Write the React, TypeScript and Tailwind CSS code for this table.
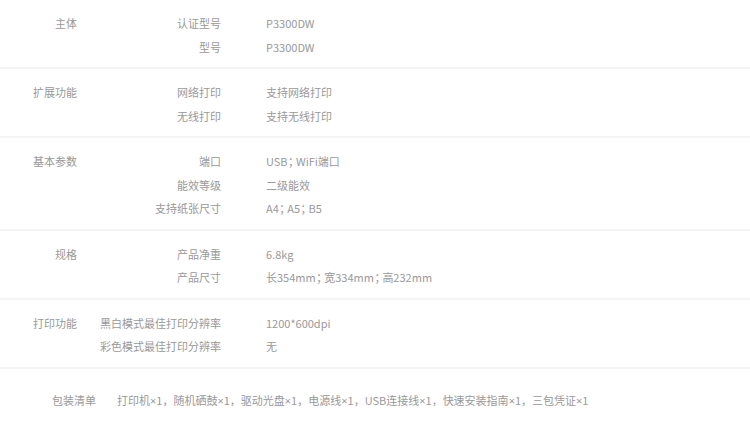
import React from "react";

type Section = { title: string; rows: [string, string][] };

const sections: Section[] = [
  { title: "主体", rows: [["认证型号", "P3300DW"], ["型号", "P3300DW"]] },
  { title: "扩展功能", rows: [["网络打印", "支持网络打印"], ["无线打印", "支持无线打印"]] },
  {
    title: "基本参数",
    rows: [
      ["端口", "USB；WiFi端口"],
      ["能效等级", "二级能效"],
      ["支持纸张尺寸", "A4；A5；B5"],
    ],
  },
  { title: "规格", rows: [["产品净重", "6.8kg"], ["产品尺寸", "长354mm；宽334mm；高232mm"]] },
  {
    title: "打印功能",
    rows: [
      ["黑白模式最佳打印分辨率", "1200*600dpi"],
      ["彩色模式最佳打印分辨率", "无"],
    ],
  },
];

function Val({ text }: { text: string }) {
  const parts = text.split("；");
  return (
    <>
      {parts.map((p, i) => (
        <React.Fragment key={i}>
          {p}
          {i < parts.length - 1 && (
            <span className="[font-feature-settings:'halt'] pl-[0.5px] pr-[2.5px]">；</span>
          )}
        </React.Fragment>
      ))}
    </>
  );
}

const pack = ["打印机", "随机硒鼓", "驱动光盘", "电源线", "USB连接线", "快速安装指南", "三包凭证"];

export default function App() {
  return (
    <div
      className="w-[750px] h-[429px] bg-white text-[11px] text-[#999] overflow-hidden"
      style={{ fontFamily: '"Noto Sans CJK SC", "Noto Sans", sans-serif' }}
    >
      {sections.map((s) => (
        <div key={s.title} className="flex pt-[12px] pb-[8px] border-b-2 border-[#f4f4f4]">
          <div className="w-[77px] shrink-0 text-right leading-[23.5px]">{s.title}</div>
          <div className="flex flex-col">
            {s.rows.map(([k, v]) => (
              <div key={k} className="flex leading-[23.5px]">
                <div className="w-[144px] text-right whitespace-nowrap">{k}</div>
                <div className="ml-[45px] whitespace-nowrap">
                  <Val text={v} />
                </div>
              </div>
            ))}
          </div>
        </div>
      ))}
      <div className="flex pt-[20px] pb-[18px] leading-[23.5px]">
        <div className="w-[96px] shrink-0 text-right">包装清单</div>
        <div className="ml-[21px] whitespace-nowrap">
          {pack.map((p, i) => (
            <React.Fragment key={p}>
              {p}
              <span style={{ fontFamily: '"Noto Sans", sans-serif' }}>×</span>1
              {i < pack.length - 1 && "，"}
            </React.Fragment>
          ))}
        </div>
      </div>
    </div>
  );
}
